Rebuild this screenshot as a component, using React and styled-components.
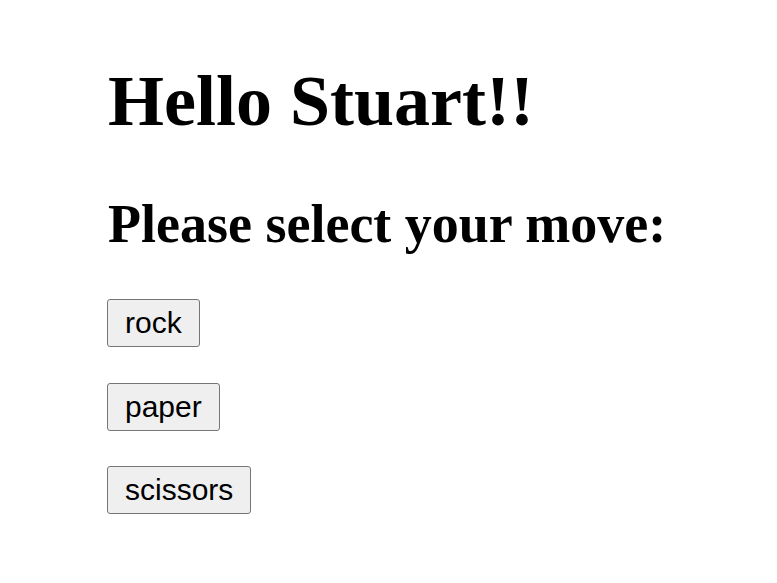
import React, { useState } from "react";
import styled, { createGlobalStyle } from "styled-components";

const GlobalStyle = createGlobalStyle`
  body {
    margin: 0;
    background: #ffffff;
    font-family: "Liberation Serif", "Times New Roman", serif;
    color: #000000;
  }
`;

const StyledGame = styled.div`
  padding: 60px 0 0 107px;

  .game-title {
    margin: 0 0 51px 1px;
    font-size: 72px;
    line-height: 82px;
    font-weight: bold;
  }

  .game-subtitle {
    margin: 0 0 44px 1px;
    font-size: 54px;
    line-height: 62px;
    font-weight: bold;
  }
`;

const MoveList = styled.div`
  display: flex;
  flex-direction: column;
  align-items: flex-start;
  gap: 35.5px;
`;

const MoveButton = styled.button`
  font-family: "Liberation Sans", Arial, sans-serif;
  font-size: 30px;
  line-height: 34px;
  padding: 6px 17px;
  color: #000000;
  background: ${(props) => (props.selected ? "#e5e5e5" : "#efefef")};
  border: 1px solid #767676;
  border-radius: 3px;
  cursor: pointer;
`;

const moves = ["rock", "paper", "scissors"];

export default function App() {
  const [move, setMove] = useState(null);

  return (
    <>
      <GlobalStyle />
      <StyledGame>
        <h1 className="game-title">Hello Stuart!!</h1>
        <h2 className="game-subtitle">Please select your move:</h2>
        <MoveList>
          {moves.map((m) => (
            <MoveButton key={m} selected={move === m} onClick={() => setMove(m)}>
              {m}
            </MoveButton>
          ))}
        </MoveList>
      </StyledGame>
    </>
  );
}
